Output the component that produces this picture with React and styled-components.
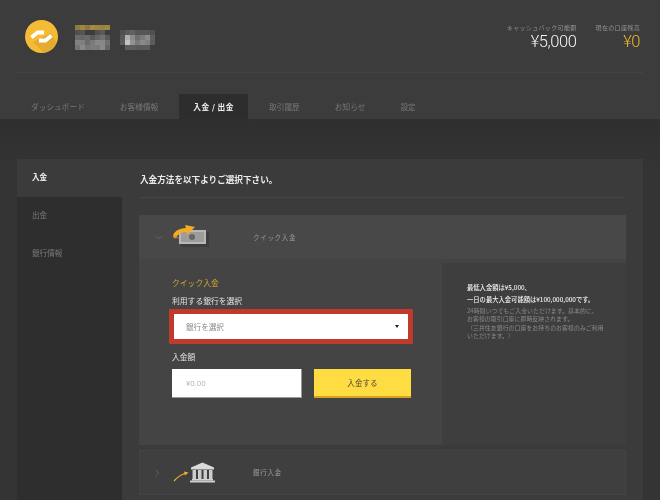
import React from "react";
import styled, { createGlobalStyle } from "styled-components";

const GlobalStyle = createGlobalStyle`
  html, body {
    margin: 0;
    padding: 0;
    background: #303030;
    font-family: "Noto Sans CJK JP", "Noto Sans", sans-serif;
  }
  * { box-sizing: border-box; }
`;

const Page = styled.div`
  width: 660px;
  height: 500px;
  overflow: hidden;
  background: linear-gradient(#2f2f2f 119px, #343434 170px);
  filter: blur(0.3px);
`;

const Header = styled.header`
  height: 119px;
  background: #3c3c3c;
  padding: 0 17px;
  display: flex;
  flex-direction: column;
`;

const TopRow = styled.div`
  height: 73px;
  flex: none;
  border-bottom: 1px solid #444444;
  display: flex;
  align-items: flex-start;
  padding: 20px 3px 0 8px;
`;

const Account = styled.div`
  display: flex;
  gap: 17px;
  flex: 1;
`;

const MosaicGroup = styled.div`
  display: flex;
  gap: 10px;
  padding-top: 5px;
`;

const MosaicSvg = styled.svg`
  display: block;
  filter: blur(0.7px);
`;

const Stats = styled.div`
  display: flex;
  gap: 19px;
  padding-top: 3px;
`;

const Stat = styled.div`
  display: flex;
  flex-direction: column;
  align-items: flex-end;
`;

const StatLabel = styled.span`
  font-size: 6.1px;
  line-height: 9px;
  letter-spacing: 0.25px;
  color: #929292;
`;

const StatValue = styled.span`
  font-family: "Roboto", "Liberation Sans", sans-serif;
  font-weight: 300;
  font-size: 16.5px;
  line-height: 20px;
  letter-spacing: -0.4px;
  color: ${(p) => (p.$gold ? "#edb62f" : "#f4f4f4")};
`;

const Tabs = styled.nav`
  display: flex;
  gap: 7px;
  margin-top: 21px;
  height: 25px;
`;

const Tab = styled.div`
  padding: 0 14px;
  display: flex;
  align-items: center;
  font-size: 7.7px;
  letter-spacing: ${(p) => (p.$active ? "0.5px" : "0")};
  color: ${(p) => (p.$active ? "#f2f2f2" : "#777777")};
  font-weight: ${(p) => (p.$active ? 700 : 400)};
  background: ${(p) => (p.$active ? "#2d2d2d" : "transparent")};
`;

const Panel = styled.section`
  margin: 40px 17px 0;
  height: 341px;
  display: flex;
  background: #3b3b3b;
`;

const Side = styled.aside`
  width: 105px;
  flex: none;
  background: #2e2e2e;
`;

const SideItem = styled.div`
  height: 38px;
  padding: 0 0 3px 15px;
  display: flex;
  align-items: center;
  font-size: 7.6px;
  color: ${(p) => (p.$active ? "#f2f2f2" : "#7a7a7a")};
  font-weight: ${(p) => (p.$active ? 700 : 400)};
  background: ${(p) => (p.$active ? "#3b3b3b" : "transparent")};
`;

const Main = styled.div`
  flex: 1;
  padding: 0 17px;
`;

const Heading = styled.h1`
  margin: 0 0 17px;
  height: 39px;
  padding: 1px 0 0 1px;
  display: flex;
  align-items: center;
  border-bottom: 1px solid #444444;
  font-size: 8.6px;
  font-weight: 700;
  color: #ececec;
`;

const AccordionHead = styled.div`
  height: ${(p) => (p.$open ? 44 : 45)}px;
  display: flex;
  align-items: center;
  background: ${(p) => (p.$open ? "#484848" : "#3f3f3f")};
  border: 1px solid ${(p) => (p.$open ? "#484848" : "#444444")};
  padding-left: 15px;
`;

const AccordionArt = styled.div`
  width: 50px;
  height: 32px;
  margin-left: 7px;
  flex: none;
`;

const AccordionTitle = styled.span`
  margin-left: 33px;
  padding-bottom: 1px;
  font-size: 6.6px;
  letter-spacing: 0.6px;
  color: #9a9a9a;
`;

const AccordionBody = styled.div`
  height: 186px;
  display: flex;
  background: #444444;
  margin-bottom: 5px;
`;

const FormCol = styled.div`
  width: 303px;
  flex: none;
  padding: 18px 0 0 33px;
`;

const NoteCol = styled.div`
  flex: 1;
  margin-top: 4px;
  background: #3e3e3e;
  padding: 19px 10px 0 25px;
`;

const QuickTitle = styled.div`
  font-size: 7.8px;
  line-height: 12px;
  color: #d0a530;
`;

const FieldLabel = styled.div`
  font-size: 7.8px;
  line-height: 12px;
  color: #e2e2e2;
  margin-top: ${(p) => p.$top}px;
`;

const SelectFrame = styled.div`
  width: 244px;
  height: 35px;
  margin: 2px 0 0 -3px;
  border: 5px solid #c0392b;
  border-radius: 1px;
  background: #ffffff;
  display: flex;
  align-items: center;
  justify-content: space-between;
  padding: 0 9px 0 12px;
  font-size: 7.6px;
  color: #888888;
`;

const Caret = styled.i`
  width: 0;
  height: 0;
  border: 2px solid transparent;
  border-top: 3px solid #222222;
  border-bottom: 0;
`;

const AmountRow = styled.div`
  display: flex;
  gap: 12px;
  margin-top: 6px;
`;

const AmountInput = styled.div`
  width: 130px;
  height: 29px;
  background: #ffffff;
  border-right: 1px solid #9a9a9a;
  border-bottom: 1px solid #9a9a9a;
  padding-left: 14px;
  display: flex;
  align-items: center;
  font-family: "Roboto", sans-serif;
  font-size: 8px;
  color: #bdbdbd;
`;

const PayButton = styled.div`
  width: 97px;
  height: 29px;
  background: #ffdc42;
  border-bottom: 2px solid #d9a21e;
  display: flex;
  align-items: center;
  justify-content: center;
  font-size: 7.6px;
  color: #504b3a;
`;

const NoteStrong = styled.p`
  margin: 0;
  font-size: 6.3px;
  line-height: 12px;
  font-weight: 500;
  color: #f2f2f2;
`;

const NoteText = styled.p`
  margin: 1px 0 0;
  font-size: 5.9px;
  line-height: 8.4px;
  letter-spacing: 0.05px;
  color: #8a8a8a;
`;

const Chevron = ({ open }) => (
  <svg width="8" height="8" viewBox="0 0 8 8" fill="none" stroke="#666666" strokeWidth="0.8">
    {open ? <path d="M0.5 3 L4 5.5 L7.5 3" /> : <path d="M0.5 0.5 L3.5 4 L0.5 7.5" />}
  </svg>
);

const Logo = () => (
  <svg width="33" height="33" viewBox="0 0 33 33">
    <circle cx="16.5" cy="16.5" r="16.5" fill="#f5bb35" />
    <path d="M8 22 L26 13 L31.5 23 A16.5 16.5 0 0 1 19 33 Z" fill="#dca42f" opacity="0.7" />
    <path d="M6.5 17.5 L12.5 12.5 L19 12.5" fill="none" stroke="#ffffff" strokeWidth="3.8" strokeLinejoin="round" />
    <path d="M26.5 15.5 L20.5 20.5 L14 20.5" fill="none" stroke="#ffffff" strokeWidth="3.8" strokeLinejoin="round" />
  </svg>
);

// blurred account name, drawn as a mosaic
const nameBlocks = [
  [0, 0, 5, 5, "#8f7a45"], [5, 0, 5, 5, "#a08540"], [10, 0, 5, 5, "#8a7648"], [15, 0, 5, 5, "#a58a40"], [20, 0, 5, 5, "#a08540"], [25, 0, 5, 5, "#9a8242"], [30, 0, 5, 5, "#a08540"],
  [0, 5, 5, 5, "#505050"], [5, 5, 5, 5, "#555555"], [20, 5, 5, 5, "#505050"], [25, 5, 5, 5, "#5a5a5a"],
  [0, 10, 5, 5, "#6a6a6a"], [5, 10, 5, 5, "#666666"], [10, 10, 5, 5, "#6a6a6a"], [15, 10, 5, 5, "#5a5a5a"], [20, 10, 5, 5, "#666666"], [25, 10, 5, 5, "#707070"], [30, 10, 5, 5, "#5a5a5a"],
  [0, 15, 10, 5, "#808080"], [10, 15, 5, 5, "#6a6a6a"], [15, 15, 5, 5, "#7a7a7a"], [20, 15, 10, 5, "#888888"], [30, 15, 5, 5, "#707070"],
  [0, 20, 5, 5, "#757575"], [5, 20, 5, 5, "#888888"], [10, 20, 5, 5, "#777777"], [15, 20, 10, 5, "#7c7c7c"], [25, 20, 5, 5, "#8a8a8a"], [30, 20, 5, 5, "#666666"],
];

const surnameBlocks = [
  [0, 5, 5, 5, "#505050"], [5, 5, 5, 5, "#5a5a5a"], [10, 5, 5, 5, "#626262"], [15, 5, 15, 5, "#565656"], [30, 5, 5, 5, "#505050"],
  [0, 10, 5, 5, "#585858"], [5, 10, 5, 5, "#b0b0b0"], [10, 10, 5, 5, "#8a8a8a"], [15, 10, 5, 5, "#6e6e6e"], [20, 10, 5, 5, "#7a7a7a"], [25, 10, 5, 5, "#8a8a8a"], [30, 10, 5, 5, "#5e5e5e"],
  [0, 15, 5, 5, "#5c5c5c"], [5, 15, 5, 5, "#c4c4c4"], [10, 15, 5, 5, "#929292"], [15, 15, 5, 5, "#7a7a7a"], [20, 15, 5, 5, "#8a8a8a"], [25, 15, 5, 5, "#808080"], [30, 15, 5, 5, "#5c5c5c"],
  [5, 20, 10, 5, "#5e5e5e"], [15, 20, 15, 5, "#5a5a5a"],
];

const Mosaic = ({ blocks }) => (
  <MosaicSvg width="35" height="25" viewBox="0 0 35 25">
    {blocks.map(([x, y, w, h, c]) => (
      <rect key={`${x}-${y}`} x={x} y={y} width={w} height={h} fill={c} />
    ))}
  </MosaicSvg>
);

const CashIcon = () => (
  <svg width="50" height="32" viewBox="0 0 50 32">
    <rect x="11" y="11" width="28" height="15" fill="#262626" opacity="0.3" />
    <rect x="9" y="9" width="27" height="14" fill="#b8b8b8" />
    <rect x="11" y="11" width="23" height="10" fill="#9c9c9c" />
    <circle cx="22" cy="16" r="3" fill="#666666" />
    <path
      d="M3 15 C4 10 9 7.5 16 7 L15 4 L25 6 L17 14 L16.5 11 C12 11 8 12.5 5.5 17.5 C4 17 3 16 3 15 Z"
      fill="#f5ac22"
    />
    <path d="M3 14 C3.5 16 6 17.5 9.5 17.5 L9.5 16.5 C7 16.5 4.5 15.5 3 14 Z" fill="#d8752a" />
  </svg>
);

const BankIcon = () => (
  <svg width="50" height="32" viewBox="0 0 50 32">
    <path d="M4 24 C8 19.5 11 17.5 15 16.5" fill="none" stroke="#eeb02a" strokeWidth="1.2" />
    <path d="M14 14.5 L18.5 15.5 L15 18.5 Z" fill="#eeb02a" />
    <path d="M21 10.5 L32.5 5.5 L44 10.5 L44 12.5 L21 12.5 Z" fill="#dadada" />
    <rect x="22.5" y="13" width="3.5" height="9" fill="#cccccc" />
    <rect x="28" y="13" width="3.5" height="9" fill="#cccccc" />
    <rect x="33.5" y="13" width="3.5" height="9" fill="#cccccc" />
    <rect x="39" y="13" width="3.5" height="9" fill="#cccccc" />
    <rect x="22" y="22" width="21" height="1.5" fill="#d5d5d5" />
    <rect x="20" y="23.5" width="25" height="2" fill="#cfcfcf" />
  </svg>
);

export default function App() {
  return (
    <Page>
      <GlobalStyle />
      <Header>
        <TopRow>
          <Account>
            <Logo />
            <MosaicGroup>
              <Mosaic blocks={nameBlocks} />
              <Mosaic blocks={surnameBlocks} />
            </MosaicGroup>
          </Account>
          <Stats>
            <Stat>
              <StatLabel>キャッシュバック可能額</StatLabel>
              <StatValue>¥5,000</StatValue>
            </Stat>
            <Stat>
              <StatLabel>現在の口座残高</StatLabel>
              <StatValue $gold>¥0</StatValue>
            </Stat>
          </Stats>
        </TopRow>
        <Tabs>
          <Tab>ダッシュボード</Tab>
          <Tab>お客様情報</Tab>
          <Tab $active>入金 / 出金</Tab>
          <Tab>取引履歴</Tab>
          <Tab>お知らせ</Tab>
          <Tab>設定</Tab>
        </Tabs>
      </Header>
      <Panel>
        <Side>
          <SideItem $active>入金</SideItem>
          <SideItem>出金</SideItem>
          <SideItem>銀行情報</SideItem>
        </Side>
        <Main>
          <Heading>入金方法を以下よりご選択下さい。</Heading>
          <AccordionHead $open>
            <Chevron open />
            <AccordionArt>
              <CashIcon />
            </AccordionArt>
            <AccordionTitle>クイック入金</AccordionTitle>
          </AccordionHead>
          <AccordionBody>
            <FormCol>
              <QuickTitle>クイック入金</QuickTitle>
              <FieldLabel $top={6}>利用する銀行を選択</FieldLabel>
              <SelectFrame>
                銀行を選択
                <Caret />
              </SelectFrame>
              <FieldLabel $top={7}>入金額</FieldLabel>
              <AmountRow>
                <AmountInput>¥0.00</AmountInput>
                <PayButton>入金する</PayButton>
              </AmountRow>
            </FormCol>
            <NoteCol>
              <NoteStrong>最低入金額は¥5,000、</NoteStrong>
              <NoteStrong>一日の最大入金可能額は¥100,000,000です。</NoteStrong>
              <NoteText>
                24時間いつでもご入金いただけます。基本的に、
                <br />
                お客様の取引口座に即時反映されます。
                <br />
                （三井住友銀行の口座をお持ちのお客様のみご利用
                <br />
                いただけます。）
              </NoteText>
            </NoteCol>
          </AccordionBody>
          <AccordionHead>
            <Chevron />
            <AccordionArt>
              <BankIcon />
            </AccordionArt>
            <AccordionTitle>銀行入金</AccordionTitle>
          </AccordionHead>
        </Main>
      </Panel>
    </Page>
  );
}
